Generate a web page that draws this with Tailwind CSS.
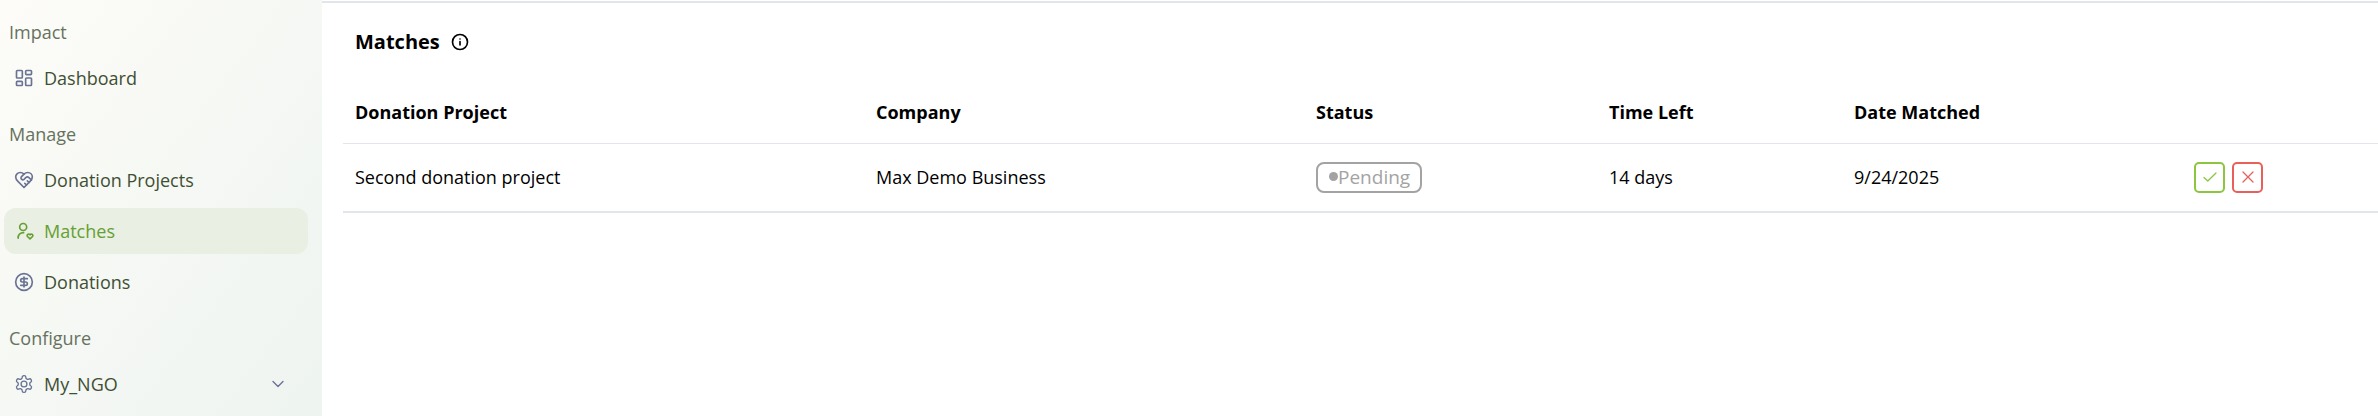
<!DOCTYPE html>
<html lang="en">
<head>
<meta charset="utf-8">
<title>Matches</title>
<meta name="viewport" content="width=device-width, initial-scale=1">
<script src="https://cdn.jsdelivr.net/npm/@tailwindcss/browser@4"></script>
</head>
<body class="bg-white font-['Open_Sans',sans-serif] overflow-hidden">
<div class="flex h-[416px] w-[2378px]">

  <!-- sidebar -->
  <aside class="w-[322px] shrink-0 bg-linear-to-br from-[#fdfcf8] to-[#eef4f0] pl-1 pr-[14px] pt-[20px]">
    <p class="pl-[5px] h-[24px] leading-[24px] text-[18px] font-medium text-[#667260]">Impact</p>
    <a class="mt-[11px] flex items-center h-[46px] rounded-xl pl-[10px] text-[18px] text-[#3f4f33]">
      <svg class="w-[20px] h-[20px] text-[#6b7394]" viewBox="0 0 24 24" fill="none" stroke="currentColor" stroke-width="2"><rect x="3" y="3" width="7" height="9" rx="1"/><rect x="14" y="3" width="7" height="5" rx="1"/><rect x="14" y="12" width="7" height="9" rx="1"/><rect x="3" y="16" width="7" height="5" rx="1"/></svg>
      <span class="ml-[10px]">Dashboard</span>
    </a>
    <p class="mt-[21px] pl-[5px] h-[24px] leading-[24px] text-[18px] font-medium text-[#667260]">Manage</p>
    <a class="mt-[11px] flex items-center h-[46px] rounded-xl pl-[10px] text-[18px] text-[#3f4f33]">
      <svg class="w-[20px] h-[20px] text-[#6b7394]" viewBox="0 0 24 24" fill="none" stroke="currentColor" stroke-width="2" stroke-linejoin="round" stroke-linecap="round"><path d="M19 14c1.49-1.46 3-3.21 3-5.500A5.500 5.500 0 0 0 16.500 3c-1.760 0-3 .5-4.500 2-1.500-1.500-2.740-2-4.500-2A5.500 5.500 0 0 0 2 8.500c0 2.300 1.500 4.050 3 5.500l7 7Z"/><path d="M12 5 9.040 7.960a2.170 2.170 0 0 0 0 3.080c.82.82 2.130.85 3 .07l2.070-1.900a2.820 2.820 0 0 1 3.790 0l2.960 2.660"/><path d="m18 15-2-2"/><path d="m15 18-2-2"/></svg>
      <span class="ml-[10px]">Donation Projects</span>
    </a>
    <a class="mt-[5px] flex items-center h-[46px] rounded-xl pl-[10px] text-[18px] text-[#65a032] bg-[#e9efe3]">
      <svg class="w-[20px] h-[20px]" viewBox="0 0 24 24" fill="none" stroke="currentColor" stroke-width="2" stroke-linejoin="round" stroke-linecap="round"><circle cx="11" cy="7.200" r="4.200"/><path d="M5 20.500c-.3-3.800 2.400-6.500 6.500-6.500"/><path d="M19.200 21.500l-3-2.900c-1.500-1.700 1.200-4.200 3-2 1.800-2.200 4.500.3 3 2z"/></svg>
      <span class="ml-[10px]">Matches</span>
    </a>
    <a class="mt-[5px] flex items-center h-[46px] rounded-xl pl-[10px] text-[18px] text-[#3f4f33]">
      <svg class="w-[20px] h-[20px] text-[#6b7394]" viewBox="0 0 24 24" fill="none" stroke="currentColor" stroke-width="2" stroke-linecap="round" stroke-linejoin="round"><circle cx="12" cy="12" r="10"/><path d="M16 8h-6a2 2 0 1 0 0 4h4a2 2 0 1 1 0 4H8"/><path d="M12 18V6"/></svg>
      <span class="ml-[10px]">Donations</span>
    </a>
    <p class="mt-[21px] pl-[5px] h-[24px] leading-[24px] text-[18px] font-medium text-[#667260]">Configure</p>
    <a class="mt-[11px] flex items-center h-[46px] rounded-xl pl-[10px] pr-[24px] text-[18px] text-[#3f4f33]">
      <svg class="w-[20px] h-[20px] text-[#6b7394]" viewBox="0 0 24 24" fill="none" stroke="currentColor" stroke-width="1.600" stroke-linecap="round" stroke-linejoin="round"><path d="M12.220 2h-.44a2 2 0 0 0-2 2v.18a2 2 0 0 1-1 1.730l-.43.25a2 2 0 0 1-2 0l-.15-.08a2 2 0 0 0-2.730.73l-.22.38a2 2 0 0 0 .73 2.730l.15.1a2 2 0 0 1 1 1.720v.51a2 2 0 0 1-1 1.740l-.15.09a2 2 0 0 0-.73 2.730l.22.38a2 2 0 0 0 2.730.73l.15-.08a2 2 0 0 1 2 0l.43.25a2 2 0 0 1 1 1.730V20a2 2 0 0 0 2 2h.44a2 2 0 0 0 2-2v-.18a2 2 0 0 1 1-1.730l.43-.25a2 2 0 0 1 2 0l.15.08a2 2 0 0 0 2.730-.73l.22-.39a2 2 0 0 0-.73-2.730l-.15-.08a2 2 0 0 1-1-1.740v-.5a2 2 0 0 1 1-1.740l.15-.09a2 2 0 0 0 .73-2.730l-.22-.38a2 2 0 0 0-2.730-.73l-.15.08a2 2 0 0 1-2 0l-.43-.25a2 2 0 0 1-1-1.730V4a2 2 0 0 0-2-2z"/><circle cx="12" cy="12" r="3.500"/></svg>
      <span class="ml-[10px]">My_NGO</span>
      <svg class="ml-auto w-[12px] h-[12px] text-[#6b7394]" viewBox="0 0 12 12" fill="none" stroke="currentColor" stroke-width="1.400" stroke-linecap="round" stroke-linejoin="round"><path d="M1 3.500 6 8.500 11 3.500"/></svg>
    </a>
  </aside>

  <!-- main -->
  <main class="flex-1 pl-[21px] relative">
    <div class="absolute left-0 right-0 top-[1px] h-[2px] bg-[#e2e5ea]"></div>
    <div class="flex items-center h-[83px] pl-[12px]">
      <h1 class="text-[20px] font-bold text-black">Matches</h1>
      <svg class="ml-[11px] w-[18px] h-[18px]" viewBox="0 0 24 24" fill="none" stroke="black" stroke-width="2.200" stroke-linecap="round"><circle cx="12" cy="12" r="10"/><path d="M12 16v-4.500"/><path d="M12 8h.01"/></svg>
    </div>
    <table class="w-full table-fixed border-collapse text-[18px] text-black">
      <thead>
        <tr class="h-[60px] border-b border-[#e2e5ea] text-left">
          <th class="w-[533px] pl-[12px] font-bold">Donation Project</th>
          <th class="w-[440px] font-bold">Company</th>
          <th class="w-[293px] font-bold">Status</th>
          <th class="w-[245px] font-bold">Time Left</th>
          <th class="w-[339px] font-bold">Date Matched</th>
          <th></th>
        </tr>
      </thead>
      <tbody>
        <tr class="h-[69px] border-b-2 border-[#e2e5ea]">
          <td class="pl-[12px]">Second donation project</td>
          <td>Max Demo Business</td>
          <td>
            <span class="inline-flex items-center h-[31px] w-[106px] pl-[11px] rounded-lg border-2 border-[#a3a3a3] text-[#a3a3a3] text-[19px] font-medium align-middle">
              <span class="w-[9px] h-[9px] rounded-full bg-[#a3a3a3] -translate-y-[1px]"></span>Pending
            </span>
          </td>
          <td>14 days</td>
          <td>9/24/2025</td>
          <td>
            <div class="flex gap-[7px] pl-[1px]">
              <button class="flex items-center justify-center w-[31px] h-[31px] rounded-[5px] border-2 border-[#8cc63f]">
                <svg class="w-[14px] h-[14px]" viewBox="0 0 14 14" fill="none" stroke="#8cc63f" stroke-width="1.300" stroke-linecap="round" stroke-linejoin="round"><path d="M1 7.500 4.800 11 13 3"/></svg>
              </button>
              <button class="flex items-center justify-center w-[31px] h-[31px] rounded-[5px] border-2 border-[#e9605a]">
                <svg class="w-[12px] h-[12px]" viewBox="0 0 12 12" fill="none" stroke="#e9605a" stroke-width="1.300" stroke-linecap="round"><path d="M1 1l10 10M11 1 1 11"/></svg>
              </button>
            </div>
          </td>
        </tr>
      </tbody>
    </table>
  </main>
</div>
</body>
</html>
